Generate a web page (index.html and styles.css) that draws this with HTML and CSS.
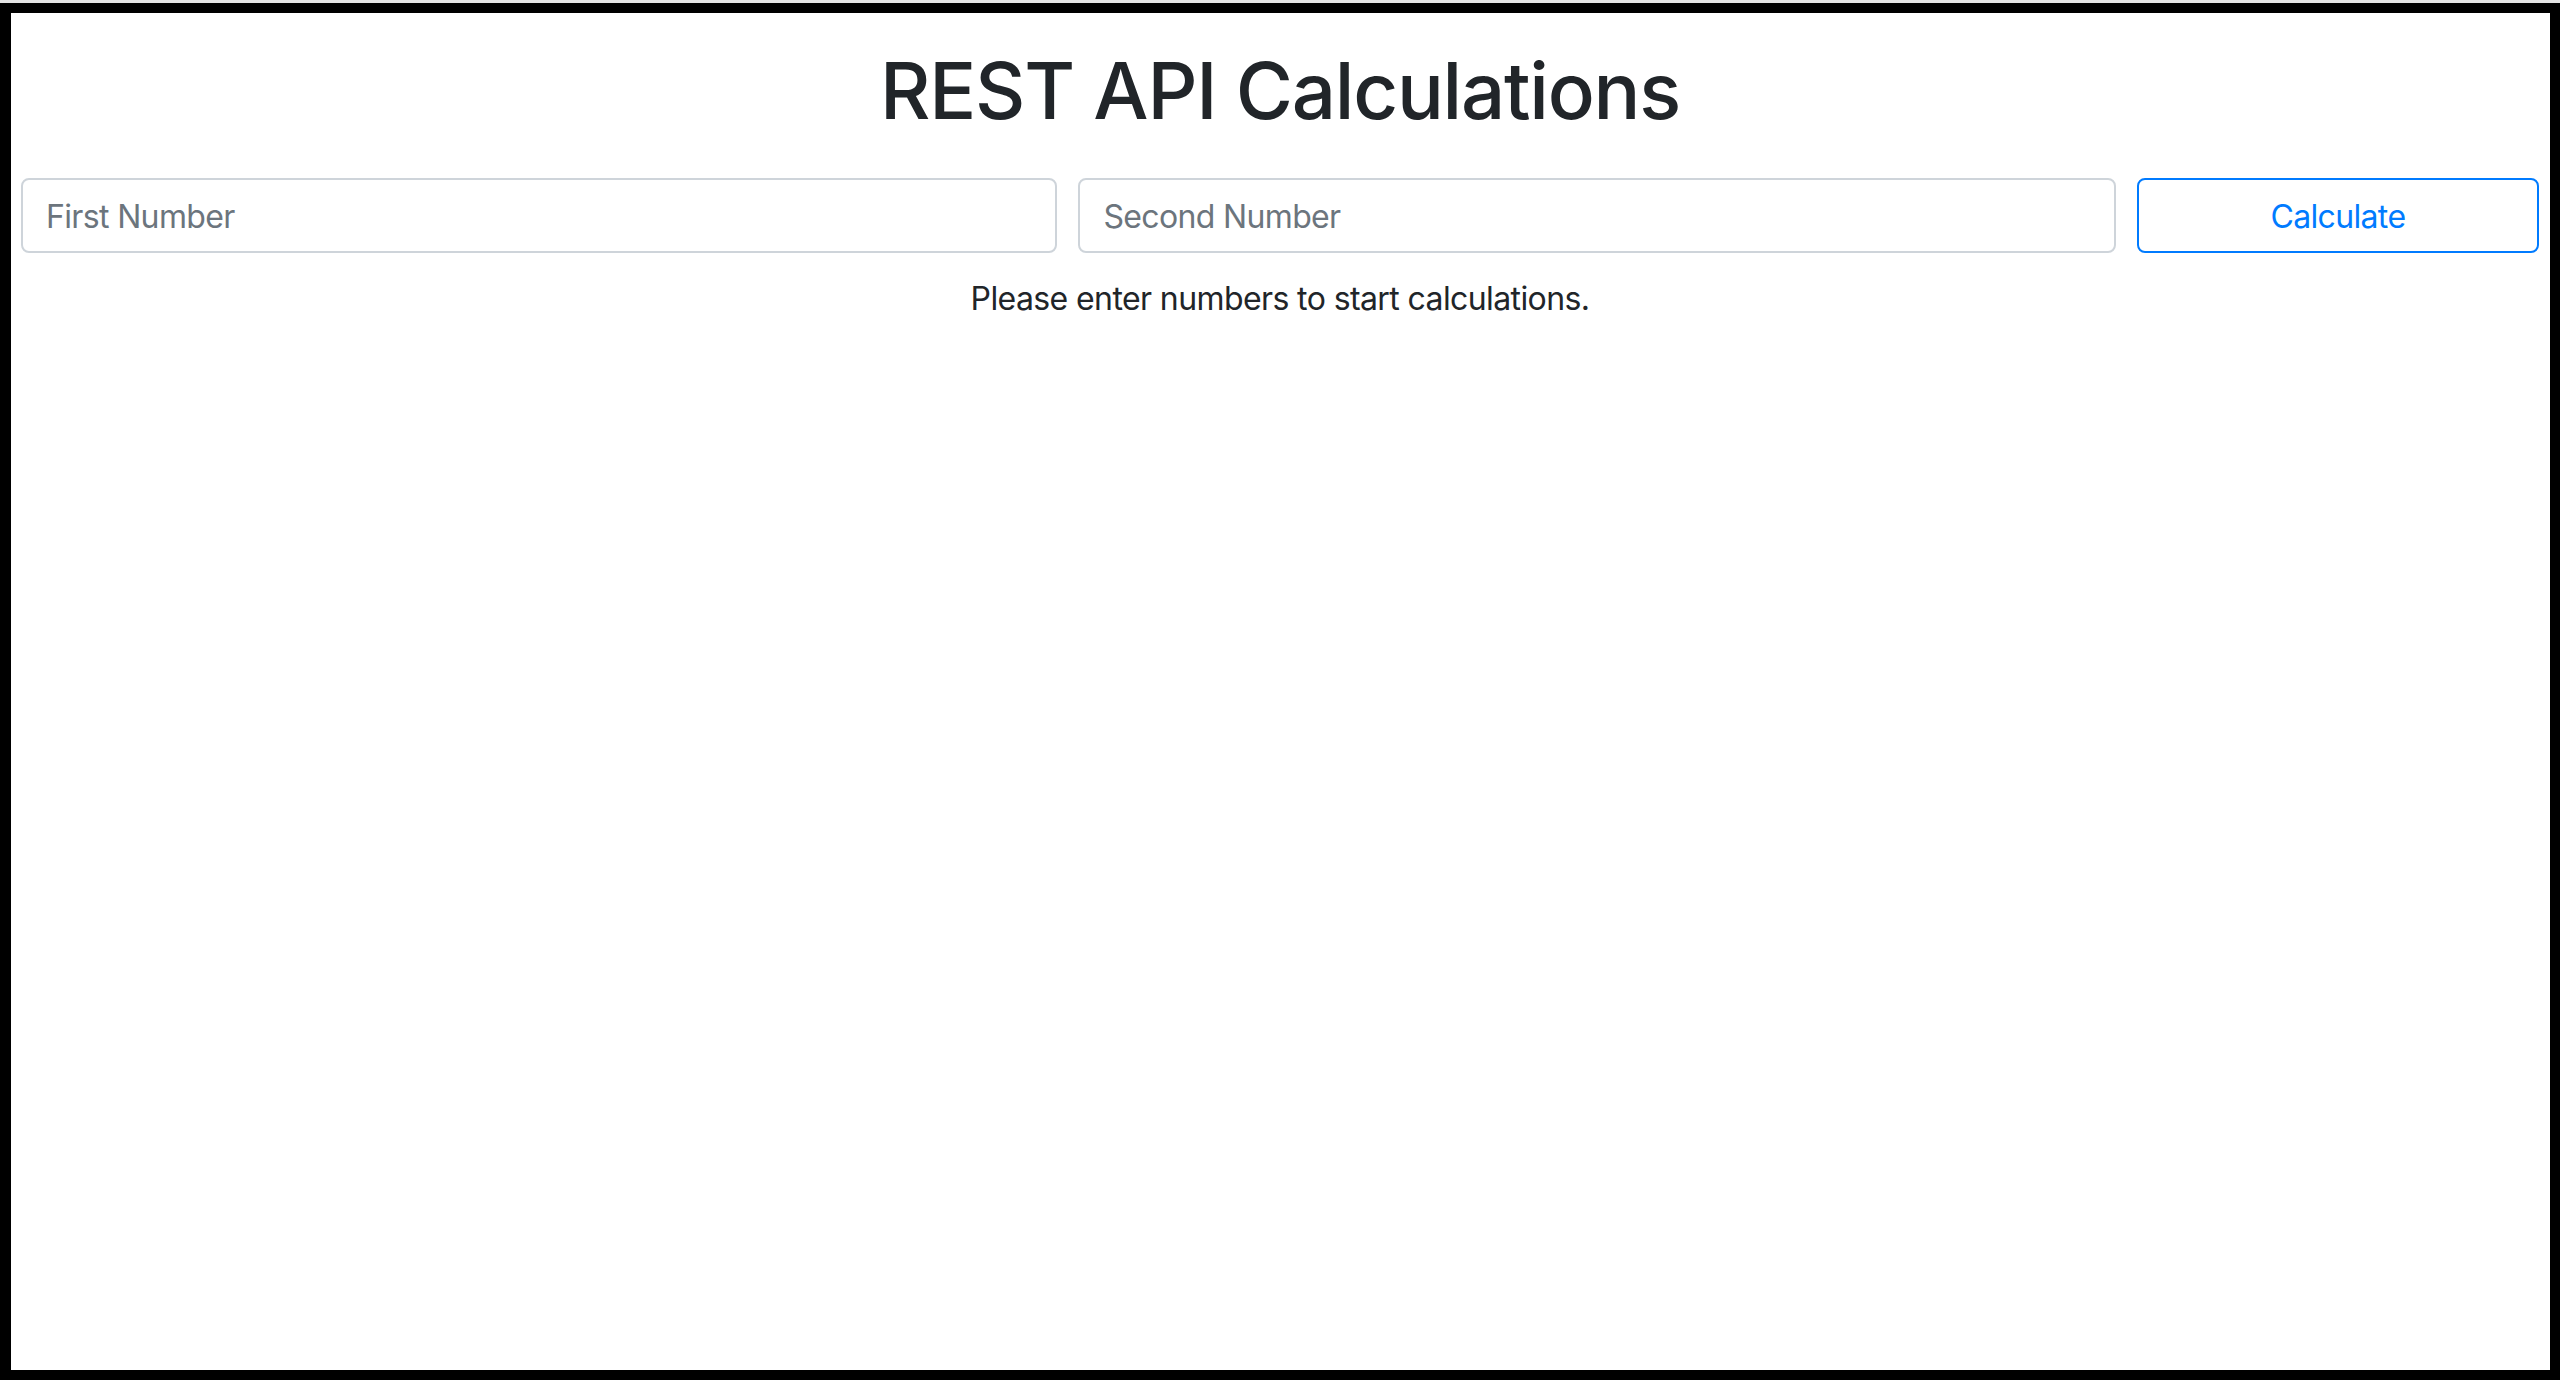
FILE: index.html
```html
<!DOCTYPE html>
<html lang="en">
<head>
<meta charset="utf-8">
<title>REST API Calculations</title>
<link rel="stylesheet" href="styles.css">
</head>
<body>
<div class="window">
  <h1 class="title">REST API Calculations</h1>
  <form class="calc-row">
    <input class="field" type="text" placeholder="First Number">
    <input class="field" type="text" placeholder="Second Number">
    <button class="btn-outline" type="button">Calculate</button>
  </form>
  <p class="message">Please enter numbers to start calculations.</p>
</div>
</body>
</html>
```
FILE: styles.css
```css
html, body {
  margin: 0;
  padding: 0;
}
body {
  background: #000;
  border-top: 3px solid #e4e4e4;
  padding: 10px 10px 10px 11px;
  font-family: Inter, "Liberation Sans", sans-serif;
  color: #212529;
}
.window {
  background: #fff;
  height: 1357px;
  padding: 0 11px 0 10px;
  box-sizing: border-box;
  overflow: hidden;
}
.title {
  margin: 31px 0 0 0;
  font-size: 78px;
  font-weight: 500;
  line-height: 1.2;
  letter-spacing: -1.25px;
  text-align: center;
  color: #212529;
}
.calc-row {
  margin: 40px 0 0 0;
  display: grid;
  grid-template-columns: 1036fr 1037fr 402fr;
  gap: 21px;
}
.field,
.btn-outline {
  height: 75px;
  box-sizing: border-box;
  border-radius: 8px;
  font-family: Inter, "Liberation Sans", sans-serif;
  font-size: 32px;
  letter-spacing: -0.65px;
  margin: 0;
}
.field {
  border: 2px solid #ced4da;
  padding: 3px 23px 0 23px;
  color: #495057;
  background: #fff;
  outline: none;
}
.field::placeholder {
  color: #6c757d;
  opacity: 1;
}
.btn-outline {
  border: 2px solid #007bff;
  color: #007bff;
  background: #fff;
  padding-top: 3px;
  cursor: pointer;
}
.message {
  margin: 22px 0 0 0;
  font-size: 32px;
  line-height: 1.5;
  letter-spacing: -0.6px;
  text-align: center;
  color: #212529;
}
```
